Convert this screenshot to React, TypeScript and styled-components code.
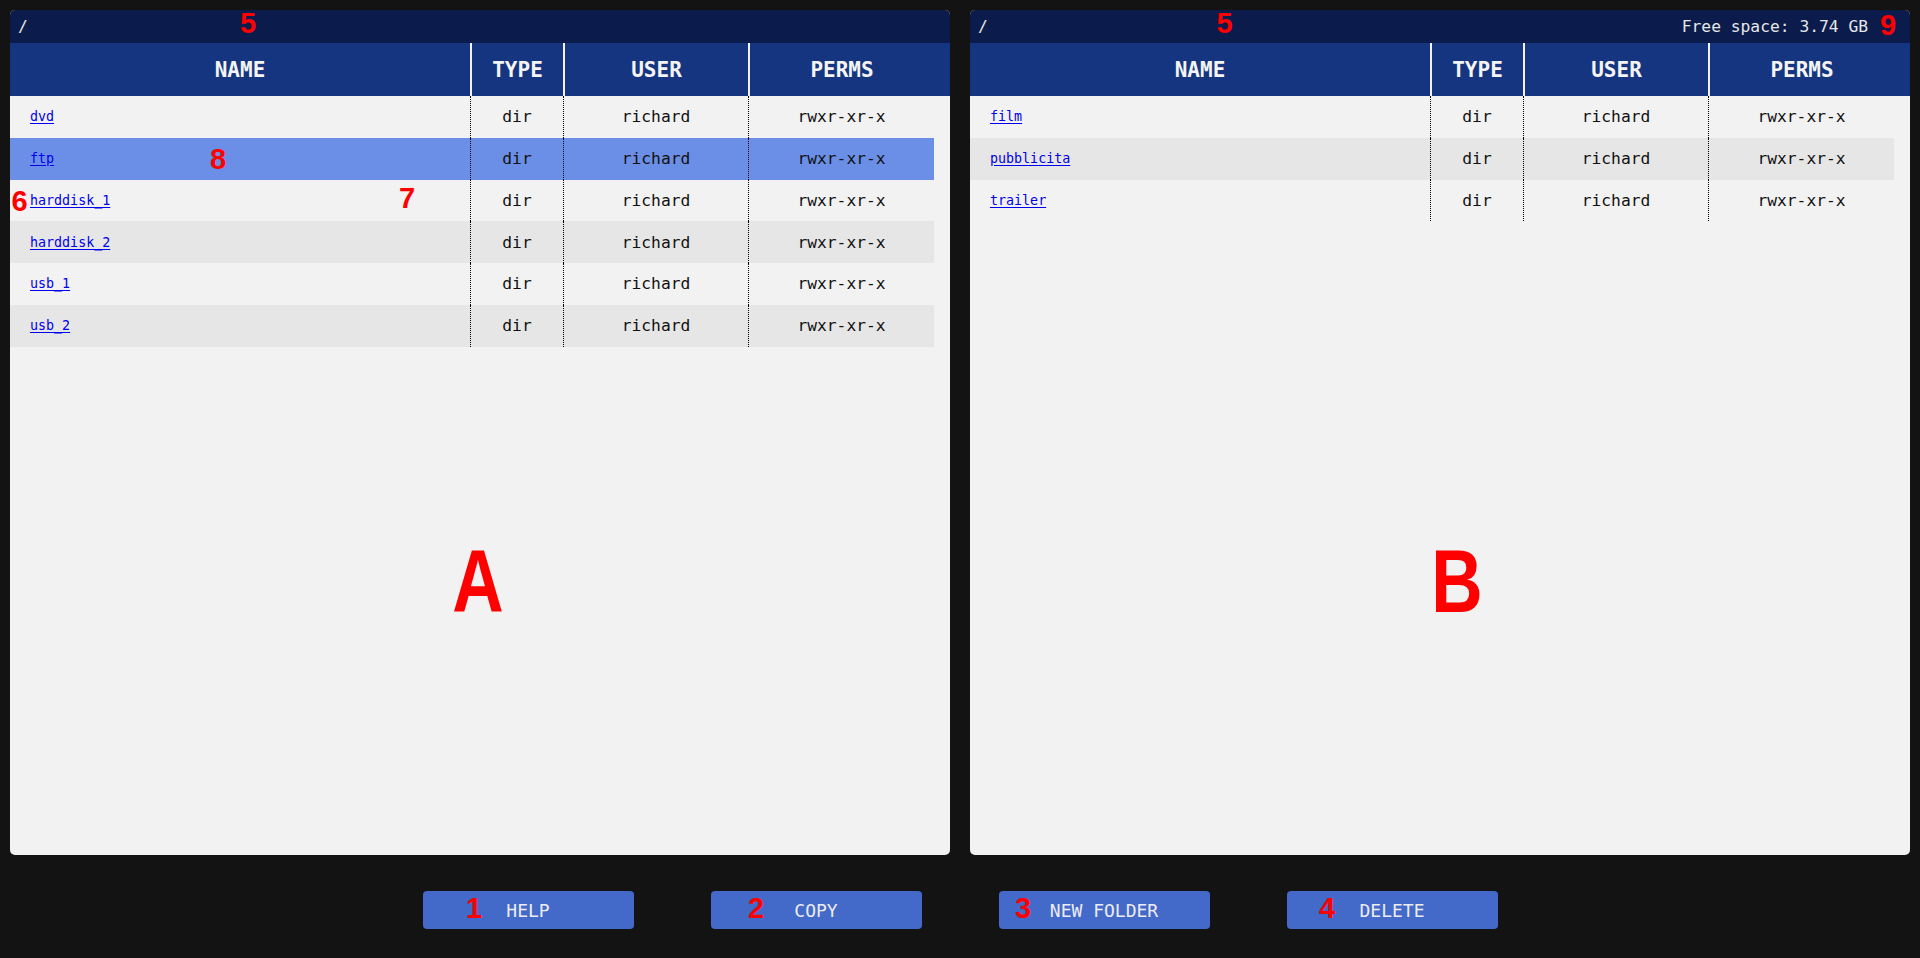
import React from "react";
import styled, { createGlobalStyle } from "styled-components";

const GlobalStyle = createGlobalStyle`
  html, body {
    margin: 0;
    padding: 0;
    background: #131313;
  }
  body {
    font-family: "DejaVu Sans Mono", "Liberation Mono", monospace;
  }
`;

const Page = styled.div`
  position: relative;
  width: 1920px;
  height: 958px;
  display: flex;
  flex-direction: column;
  background: #131313;
  overflow: hidden;
`;

const Panels = styled.div`
  display: grid;
  grid-template-columns: 940px 940px;
  gap: 20px;
  padding: 10px 10px 0 10px;
  height: 845px;
`;

const Panel = styled.section`
  background: #f2f2f2;
  border-radius: 5px;
  overflow: hidden;
  display: flex;
  flex-direction: column;
`;

const PathBar = styled.div`
  height: 33px;
  flex: none;
  background: #0b1b4b;
  color: #e6e6e6;
  font-size: 16.3px;
  display: flex;
  align-items: center;
  justify-content: space-between;
  padding: 0 42px 0 8px;
`;

const COLS = "460px 93px 185px 186px";

const HeadRow = styled.div`
  height: 53px;
  flex: none;
  background: #163581;
  display: grid;
  grid-template-columns: ${COLS};
  padding-right: 16px;
`;

const HeadCell = styled.div<{ $first?: boolean }>`
  display: flex;
  align-items: center;
  justify-content: center;
  color: #f4f4f4;
  font-weight: bold;
  font-size: 21px;
  border-left: ${(p) => (p.$first ? "none" : "2px solid #f2f2f2")};
`;

const RowList = styled.div`
  display: flex;
  flex-direction: column;
  width: 924px;
`;

const Row = styled.div<{ $alt?: boolean; $selected?: boolean }>`
  display: grid;
  grid-template-columns: ${COLS};
  height: 41.75px;
  background: ${(p) => (p.$selected ? "#6b8fe6" : p.$alt ? "#e6e6e6" : "#f2f2f2")};
`;

const Cell = styled.div<{ $name?: boolean }>`
  display: flex;
  align-items: center;
  justify-content: ${(p) => (p.$name ? "flex-start" : "center")};
  padding-left: ${(p) => (p.$name ? "20px" : "0")};
  border-left: ${(p) => (p.$name ? "none" : "1px dotted #000")};
  color: #111;
  font-size: 16.3px;
`;

const FileLink = styled.a`
  color: #0000ee;
  text-decoration: underline;
  text-underline-offset: 2px;
  font-size: 13.33px;
  cursor: pointer;
`;

const Footer = styled.div`
  flex: 1;
  display: flex;
  justify-content: center;
  align-items: flex-start;
  gap: 77px;
  padding-top: 36px;
`;

const Button = styled.button`
  width: 211px;
  height: 38px;
  border: none;
  border-radius: 4px;
  background: #436ac9;
  color: #ececf2;
  font-family: "DejaVu Sans Mono", "Liberation Mono", monospace;
  font-size: 18px;
  display: flex;
  align-items: center;
  justify-content: center;
  padding: 0;
  cursor: pointer;
`;

const Mark = styled.span<{ $cx: number; $top: number; $big?: boolean }>`
  position: absolute;
  left: ${(p) => p.$cx}px;
  top: ${(p) => p.$top}px;
  transform: translateX(-50%) ${(p) => (p.$big ? "scaleX(0.8)" : "")};
  color: #ff0000;
  font-family: "Liberation Sans", Arial, sans-serif;
  font-weight: bold;
  font-size: ${(p) => (p.$big ? 89 : 29)}px;
  line-height: 1;
  pointer-events: none;
`;

type Entry = { name: string; type: string; user: string; perms: string };

const leftFiles: Entry[] = ["dvd", "ftp", "harddisk_1", "harddisk_2", "usb_1", "usb_2"].map((n) => ({
  name: n,
  type: "dir",
  user: "richard",
  perms: "rwxr-xr-x",
}));

const rightFiles: Entry[] = ["film", "pubblicita", "trailer"].map((n) => ({
  name: n,
  type: "dir",
  user: "richard",
  perms: "rwxr-xr-x",
}));

function FilePanel({
  files,
  selected,
  freeSpace,
}: {
  files: Entry[];
  selected?: number;
  freeSpace?: string;
}) {
  return (
    <Panel>
      <PathBar>
        <span>/</span>
        {freeSpace ? <span>{freeSpace}</span> : null}
      </PathBar>
      <HeadRow>
        <HeadCell $first>NAME</HeadCell>
        <HeadCell>TYPE</HeadCell>
        <HeadCell>USER</HeadCell>
        <HeadCell>PERMS</HeadCell>
      </HeadRow>
      <RowList>
        {files.map((f, i) => (
          <Row key={f.name} $alt={i % 2 === 1} $selected={i === selected}>
            <Cell $name>
              <FileLink>{f.name}</FileLink>
            </Cell>
            <Cell>{f.type}</Cell>
            <Cell>{f.user}</Cell>
            <Cell>{f.perms}</Cell>
          </Row>
        ))}
      </RowList>
    </Panel>
  );
}

export default function App() {
  return (
    <Page>
      <GlobalStyle />
      <Panels>
        <FilePanel files={leftFiles} selected={1} />
        <FilePanel files={rightFiles} freeSpace="Free space: 3.74 GB" />
      </Panels>
      <Footer>
        <Button>HELP</Button>
        <Button>COPY</Button>
        <Button>NEW FOLDER</Button>
        <Button>DELETE</Button>
      </Footer>

      <Mark $cx={248} $top={9}>5</Mark>
      <Mark $cx={1224.5} $top={9}>5</Mark>
      <Mark $cx={1888} $top={11}>9</Mark>
      <Mark $cx={19.5} $top={187}>6</Mark>
      <Mark $cx={407} $top={184}>7</Mark>
      <Mark $cx={218} $top={144.5}>8</Mark>
      <Mark $cx={478} $top={537} $big>A</Mark>
      <Mark $cx={1457} $top={537} $big>B</Mark>
      <Mark $cx={474} $top={894}>1</Mark>
      <Mark $cx={756} $top={894}>2</Mark>
      <Mark $cx={1023} $top={894}>3</Mark>
      <Mark $cx={1327} $top={894}>4</Mark>
    </Page>
  );
}
